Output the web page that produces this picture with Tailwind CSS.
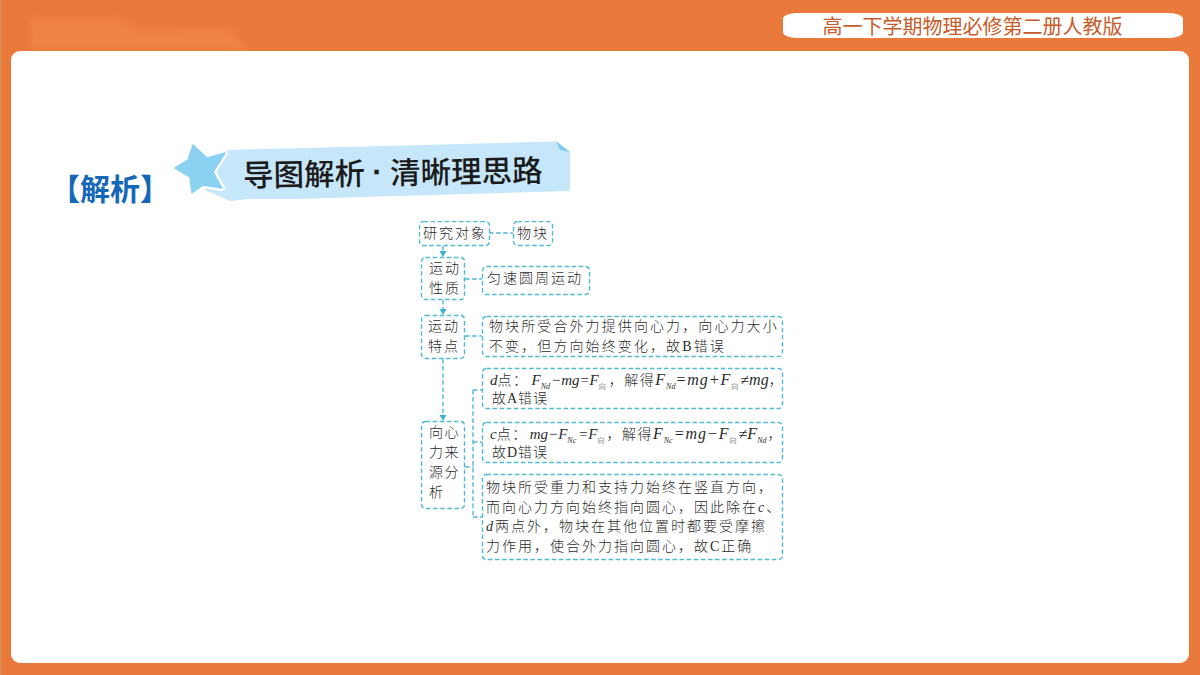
<!doctype html>
<html lang="zh-CN">

<head>
    <meta charset="UTF-8" />
    <title>导图解析</title>
    <script src="https://cdn.jsdelivr.net/npm/@tailwindcss/browser@4"></script>
</head>

<body class="w-[1200px] h-[675px] overflow-hidden bg-[#ea7a3c] font-['Liberation_Serif','Noto_Sans_CJK_SC',serif]">
    <div class="relative flex flex-col w-full h-full pl-[11px] pr-[11px] pb-[12px]">
        <div class="absolute left-0 top-0 w-[2px] h-full bg-[#dc8c4c]"></div>
        <!-- top bar -->
        <div class="relative flex justify-end items-start h-[51px] pt-[13px] pr-[6px] shrink-0">
            <svg class="absolute left-[-11px] top-0 blur-[3px]" width="270" height="51">
                <polygon points="30,18 120,18 140,30 230,28 248,50 30,50" fill="#ee8344" />
            </svg>
            <div class="relative flex items-center justify-center w-[400px] h-[25px] pr-[21px] bg-white rounded-[14px/6px] text-[20px] leading-none text-[#c75c2b] font-['Noto_Sans_CJK_SC',sans-serif]">
                高一下学期物理必修第二册人教版
            </div>
        </div>

        <!-- white panel -->
        <div class="relative grow bg-white rounded-[9px]">
            <!-- heading -->
            <div class="absolute left-[39px] top-[116px] text-[30px] leading-[40px] font-bold text-[#1568b8] font-['Noto_Sans_CJK_SC',sans-serif]">【解析】</div>
            <svg class="absolute left-[150px] top-[80px]" width="430" height="80" viewBox="161 131 430 80">
                <polygon points="222,150 556,141.5 570,152 570,191 330,198 300,199 250,199 230,201 205,190" fill="#c6e6f9" />
                <polygon points="556,141 570,152 560,150" fill="#7fcbee" />
                <path d="M175 168 188 160 193 145 207 158 225 153 213 172 222 188 203 185 192 193 190 177Z" fill="#ffffff" stroke="#ffffff" stroke-width="6" stroke-linejoin="round" />
                <path d="M175 168 188 160 193 145 207 158 225 153 213 172 222 188 203 185 192 193 190 177Z" fill="#8bd1f1" stroke="#8bd1f1" stroke-width="1.5" stroke-linejoin="round" />
            </svg>
            <div class="absolute left-[232px] top-[100px] flex -rotate-1 whitespace-nowrap text-[30.5px] leading-[40px] font-medium text-[#1b1b1b] font-['Noto_Sans_CJK_SC',sans-serif]">
                <span>导图解析</span>
                <span class="w-[25px] text-center font-bold font-['Liberation_Sans',sans-serif]">·</span>
                <span>清晰理思路</span>
            </div>

            <!-- mind map, origin at the 研究对象 node -->
            <div class="absolute left-[408px] top-[170px] w-[375px] h-[340px] text-[14px] leading-[20px] text-[#2b2b2b] font-light">
                <svg class="absolute left-0 top-0" width="375" height="340" viewBox="419 221 375 340" fill="none" stroke="#50b8d8" stroke-width="1.4" stroke-dasharray="4.5 2.6">
                    <rect x="419.5" y="221.5" width="70" height="24" rx="4" />
                    <rect x="513.5" y="221.5" width="39" height="24" rx="4" />
                    <rect x="421.5" y="257.5" width="43" height="42" rx="4" />
                    <rect x="482.5" y="266.5" width="107" height="28" rx="4" />
                    <rect x="421.5" y="315.5" width="43" height="43" rx="4" />
                    <rect x="482.5" y="316.5" width="300" height="40" rx="4" />
                    <rect x="482.5" y="368.5" width="300" height="40" rx="4" />
                    <rect x="421.5" y="421.5" width="43" height="87" rx="4" />
                    <rect x="482.5" y="422.5" width="300" height="40" rx="4" />
                    <rect x="482.5" y="474.5" width="300" height="85" rx="4" />
                    <path d="M489 233H513M465 279H482M465 336H482M465 467H473M473 390V517M473 390H482M473 442H482M473 517H482" />
                    <path d="M443 359V416M443 246V252M443 300V310" />
                    <g fill="#3fb0d6" stroke="none">
                        <polygon points="439.5,251 446.5,251 443,257" />
                        <polygon points="439.5,309 446.5,309 443,315" />
                        <polygon points="439.5,415 446.5,415 443,421" />
                    </g>
                </svg>

                <div class="absolute left-[4px] top-[3px] tracking-[2px] whitespace-nowrap">研究对象</div>
                <div class="absolute left-[98px] top-[3px] tracking-[2px] whitespace-nowrap">物块</div>
                <div class="absolute left-[10px] top-[38px] w-[32px] tracking-[2px]">运动<br />性质</div>
                <div class="absolute left-[68px] top-[48px] tracking-[2px] whitespace-nowrap">匀速圆周运动</div>
                <div class="absolute left-[9px] top-[96px] w-[32px] tracking-[2px]">运动<br />特点</div>
                <div class="absolute left-[70px] top-[96px] tracking-[2.1px] whitespace-nowrap">物块所受合外力提供向心力，向心力大小<br />不变，但方向始终变化，故B错误</div>

                <div class="absolute left-[71px] top-[149px] whitespace-nowrap">
                    <p class="flex items-baseline"><i class="text-[15px]">d</i><span class="tracking-[1.5px]">点：</span><i class="text-[15px] ml-[3px]">F</i><i class="text-[8px] mr-[1px] translate-y-[4px]">Nd</i><i class="text-[15px]">−mg=F</i><span class="text-[7px] translate-y-[4px]">向</span><span class="tracking-[1.5px] ml-[3px]">，解得</span><i class="text-[16px]">F</i><i class="text-[8px] ml-[1px] translate-y-[4px]">Nd</i><i class="text-[16px] tracking-[1px]">=mg+F</i><span class="text-[7px] mr-[2px] translate-y-[4px]">向</span><i class="text-[16px]">≠mg</i>，</p>
                    <p class="tracking-[1px] mt-[-4px] ml-[2px]">故A错误</p>
                </div>

                <div class="absolute left-[71px] top-[203px] whitespace-nowrap">
                    <p class="flex items-baseline"><i class="text-[15px]">c</i><span class="tracking-[1.5px]">点：</span><i class="text-[15px] ml-[2px]">mg−F</i><i class="text-[8px] mr-[2px] translate-y-[4px]">Nc</i><i class="text-[15px]">=F</i><span class="text-[7px] translate-y-[4px]">向</span><span class="tracking-[1.5px] ml-[2px]">，解得</span><i class="text-[16px]">F</i><i class="text-[8px] ml-[1px] mr-[1px] translate-y-[4px]">Nc</i><i class="text-[16px] tracking-[1px]">=mg−F</i><span class="text-[7px] mr-[2px] translate-y-[4px]">向</span><i class="text-[16px]">≠F</i><i class="text-[8px] mr-[1px] translate-y-[4px]">Nd</i>，</p>
                    <p class="tracking-[1px] mt-[-4px] ml-[2px]">故D错误</p>
                </div>

                <div class="absolute left-[10px] top-[202px] w-[36px] tracking-[1.5px]">向心<br />力来<br />源分<br />析</div>
                <div class="absolute left-[67px] top-[257px] tracking-[2px] leading-[19.5px] whitespace-nowrap">物块所受重力和支持力始终在竖直方向，<br />而向心力方向始终指向圆心，因此除在<i>c</i>、<br /><i>d</i>两点外，物块在其他位置时都要受摩擦<br />力作用，使合外力指向圆心，故C正确</div>
            </div>
        </div>
    </div>
</body>

</html>
